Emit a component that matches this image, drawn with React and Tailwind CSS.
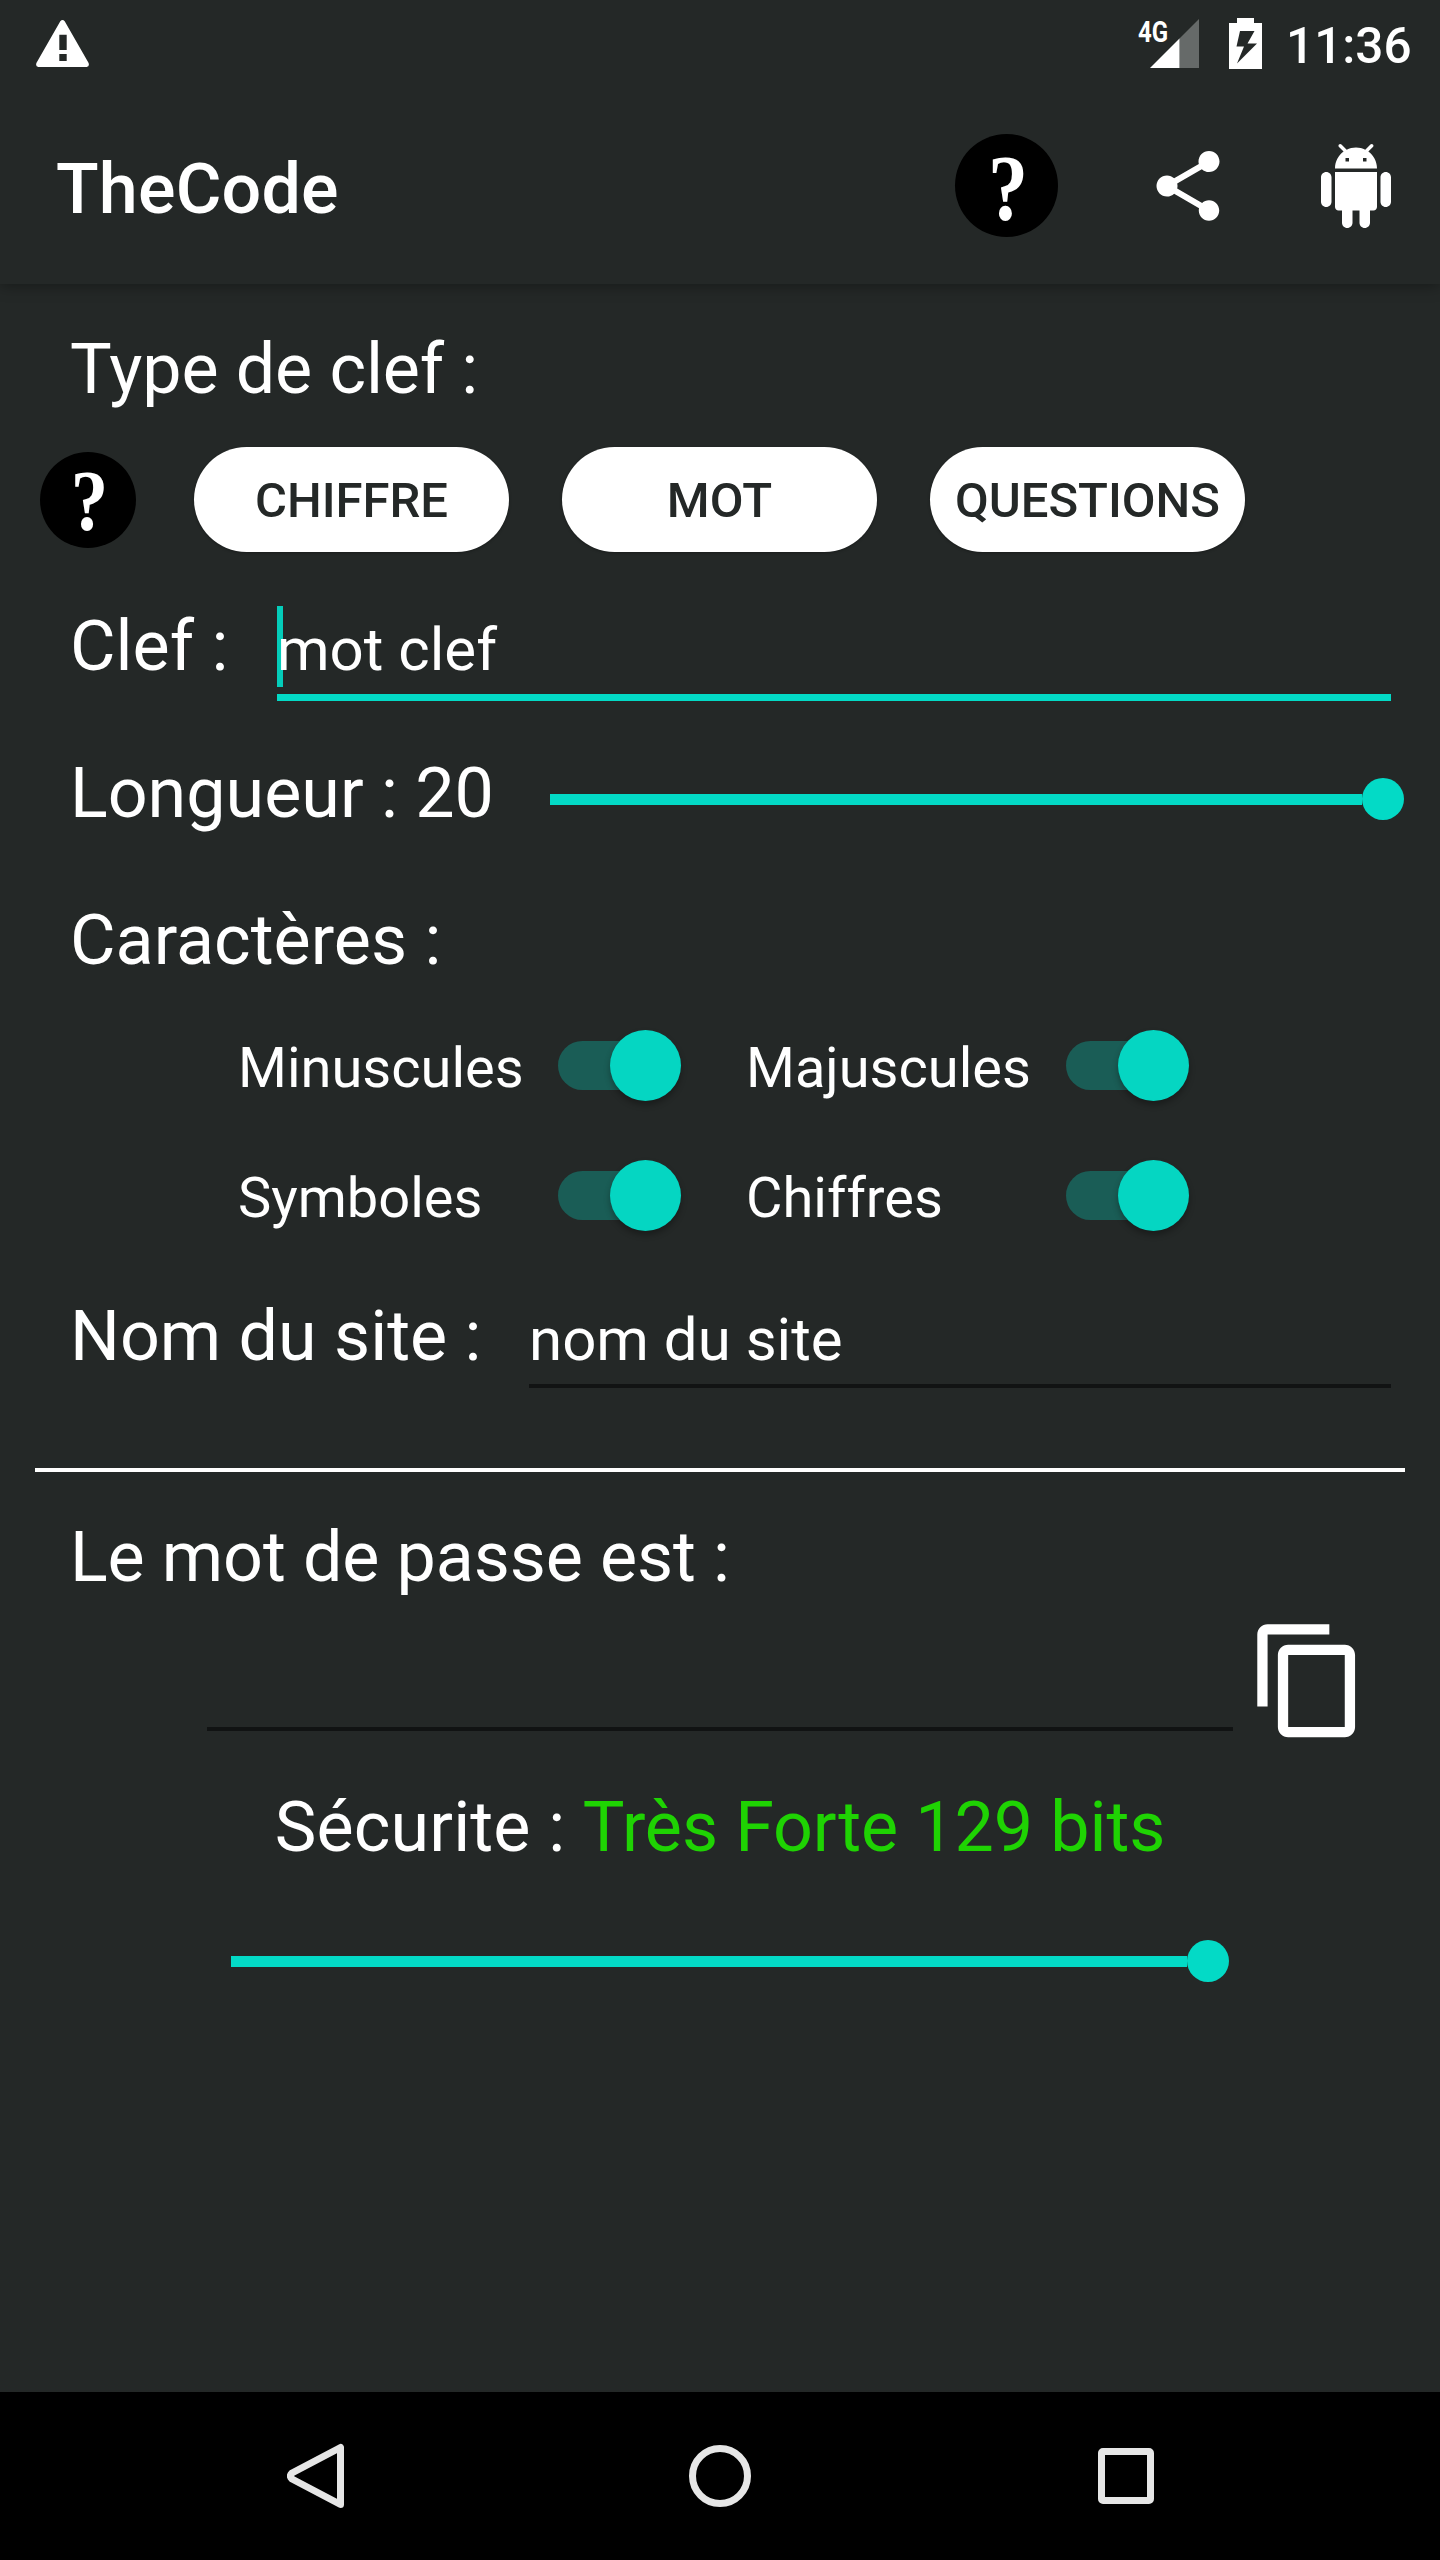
const ANDROID =
  "M6 18c0 .55.45 1 1 1h1v3.5c0 .83.67 1.5 1.5 1.5s1.5-.67 1.5-1.5V19h2v3.5c0 .83.67 1.5 1.5 1.5s1.5-.67 1.5-1.5V19h1c.55 0 1-.45 1-1V8H6v10zM3.5 8C2.67 8 2 8.67 2 9.5v7c0 .83.67 1.5 1.5 1.5S5 17.33 5 16.5v-7C5 8.67 4.33 8 3.5 8zm17 0c-.83 0-1.5.67-1.5 1.5v7c0 .83.67 1.5 1.5 1.5s1.5-.67 1.5-1.5v-7c0-.83-.67-1.5-1.5-1.5zm-4.97-5.84l1.3-1.3c.2-.2.2-.51 0-.71-.2-.2-.51-.2-.71 0l-1.48 1.48C13.85 1.23 12.95 1 12 1c-.96 0-1.86.23-2.66.63L7.85.15c-.2-.2-.51-.2-.71 0-.2.2-.2.51 0 .71l1.31 1.31C6.97 3.26 6 5.01 6 7h12c0-1.99-.97-3.75-2.47-4.84zM10 5H9V4h1v1zm5 0h-1V4h1v1z";
const SHARE =
  "M18 16.08c-.76 0-1.44.3-1.96.77L8.91 12.7c.05-.23.09-.46.09-.7s-.04-.47-.09-.7l7.05-4.11c.54.5 1.25.81 2.04.81 1.66 0 3-1.34 3-3s-1.34-3-3-3-3 1.34-3 3c0 .24.04.47.09.7L8.04 9.81C7.5 9.31 6.79 9 6 9c-1.66 0-3 1.34-3 3s1.34 3 3 3c.79 0 1.5-.31 2.04-.81l7.12 4.16c-.05.21-.08.43-.08.65 0 1.61 1.31 2.92 2.92 2.92 1.61 0 2.92-1.31 2.92-2.92s-1.31-2.92-2.92-2.92z";
const COPY =
  "M16 1H4c-1.1 0-2 .9-2 2v14h2V3h12V1zm3 4H8c-1.1 0-2 .9-2 2v14c0 1.1.9 2 2 2h11c1.1 0 2-.9 2-2V7c0-1.1-.9-2-2-2zm0 16H8V7h11v14z";

function Icon({ d, className }) {
  return (
    <svg viewBox="0 0 24 24" fill="currentColor" className={className}>
      <path d={d} />
    </svg>
  );
}

function Label({ children, className = "" }) {
  return (
    <div className={"text-[70px] leading-[82px] whitespace-pre " + className}>{children}</div>
  );
}

function Slider({ className }) {
  return (
    <div className={"flex h-[42px] items-center " + className}>
      <div className="h-[11px] flex-1 bg-[#03dac6]" />
      <div className="size-[42px] rounded-full bg-[#03dac6]" />
    </div>
  );
}

function Toggle({ label }) {
  return (
    <div className="flex h-[130px] w-[508px] items-center">
      <span className="w-[320px] pt-[6px] text-[56px] leading-[66px]">{label}</span>
      <div className="flex h-[49px] w-[118px] items-center justify-end rounded-full bg-[#1a5d56]">
        <div className="-mr-[5px] size-[71px] rounded-full bg-[#05d6c2] shadow-[0_4px_6px_rgba(0,0,0,0.3)]" />
      </div>
    </div>
  );
}

function PillButton({ children }) {
  return (
    <button className="h-[105px] w-[315px] rounded-full bg-white pt-[3px] text-[49px] leading-[58px] font-medium text-[#242827] shadow-[0_1px_3px_rgba(0,0,0,0.3)]">
      {children}
    </button>
  );
}

function StatusBar() {
  return (
    <div className="flex h-[84px] items-start text-white">
      <svg viewBox="0 0 53 47" fill="currentColor" className="mt-5 ml-9 h-[47px] w-[53px]">
        <path
          fillRule="evenodd"
          d="M24.3 1.2q2.2-2.2 4.4 0L52.6 43q1.1 3.8-2 3.9H2.4Q-.7 46.700.4 43zM23.300 14.700v15.300h7.400v-15.300zM23.300 34v7h7.400v-7z"
        />
      </svg>
      <div className="flex-1" />
      <div className="relative mt-[19px] h-[49px] w-[61px]">
        <span className="absolute top-[-5px] left-0 origin-left scale-x-[0.8] text-[30px] leading-[35px] font-bold">
          4G
        </span>
        <svg viewBox="0 0 49 49" className="ml-3 size-[49px]">
          <path d="M49 0V49H29.500V19.500z" fill="#666a69" />
          <path d="M29.500 19.500V49H0z" fill="#fff" />
        </svg>
      </div>
      <svg viewBox="0 0 33 51" fill="currentColor" className="mt-[18px] ml-[30px] h-[51px] w-[33px]">
        <path
          fillRule="evenodd"
          d="M8 0h17v5h8v46H0V5h8zM11 13L7.500 28.500H15L8 45.500 28 25.500H18.500L25.500 13z"
        />
      </svg>
      <div className="mt-[17px] ml-[24px] w-[154px] text-[49.500px] leading-[58px] font-medium">11:36</div>
    </div>
  );
}

export default function App() {
  return (
    <div
      className="flex h-[2560px] w-[1440px] flex-col overflow-hidden bg-[#242827] text-white"
      style={{ fontFamily: "Roboto, sans-serif" }}
    >
      <header className="h-[284px] shrink-0 shadow-[0_2px_14px_rgba(0,0,0,0.35)]">
        <StatusBar />
        <div className="flex h-[200px] items-start pl-14">
          <h1 className="mt-[64px] text-[70px] leading-[82px] font-medium tracking-[0.2px]">
            TheCode
          </h1>
          <div className="flex-1" />
          <div className="mt-[50px] mr-[88px] flex size-[103px] items-center justify-center rounded-full bg-black">
            <span className="scale-x-[0.86] pt-[3px] pl-[3px] font-[Liberation_Serif] text-[93px] leading-[103px] font-bold">
              ?
            </span>
          </div>
          <Icon d={SHARE} className="mt-[60px] mr-[84px] size-[84px]" />
          <Icon d={ANDROID} className="mt-[60px] mr-[42px] size-[84px]" />
        </div>
      </header>

      <main className="flex flex-1 flex-col pt-[44px]">
        <Label className="ml-[70px] tracking-[-0.1px]">Type de clef :</Label>

        <div className="mt-[37px] flex items-center">
          <div className="mr-[58px] ml-[40px] flex size-[96px] items-center justify-center rounded-full bg-black">
            <span className="scale-x-[0.86] pt-[3px] pl-[3px] font-[Liberation_Serif] text-[87px] leading-[96px] font-bold">
              ?
            </span>
          </div>
          <div className="flex gap-[53px]">
            <PillButton>CHIFFRE</PillButton>
            <PillButton>MOT</PillButton>
            <PillButton>QUESTIONS</PillButton>
          </div>
        </div>

        <div className="mt-[53px] flex h-[96px]">
          <Label className="ml-[70px] w-[207px]">Clef :</Label>
          <div className="relative h-[96px] w-[1114px] border-b-[7px] border-[#03dac6]">
            <div className="absolute top-px left-0 h-[81px] w-[6px] bg-[#04cdba]" />
            <div className="relative pt-[4px] text-[60px] leading-[82px]">mot clef</div>
          </div>
        </div>

        <div className="mt-[57px] flex h-[82px] items-center">
          <Label className="-mt-[12px] ml-[70px] w-[480px]">Longueur : 20</Label>
          <Slider className="w-[854px]" />
        </div>

        <Label className="mt-[59px] ml-[70px]">Caractères :</Label>

        <div className="mt-[19px] ml-[238px] grid w-[1016px] grid-cols-2">
          <Toggle label="Minuscules" />
          <Toggle label="Majuscules" />
          <Toggle label="Symboles" />
          <Toggle label="Chiffres" />
        </div>

        <div className="mt-[35px] flex h-[93px]">
          <Label className="ml-[70px] w-[459px]">Nom du site :</Label>
          <div className="h-[93px] w-[862px] border-b-4 border-[#111313] pt-[4px] text-[60px] leading-[82px]">
            nom du site
          </div>
        </div>

        <div className="mx-[35px] mt-[80px] h-1 bg-white" />

        <Label className="mt-[44px] ml-[70px] tracking-[-0.12px]">Le mot de passe est :</Label>

        <div className="flex h-[145px]">
          <div className="ml-[207px] h-[133px] w-[1026px] border-b-4 border-[#111313]" />
          <Icon d={COPY} className="mt-[21px] ml-[14px] size-[123.500px]" />
        </div>

        <div className="mt-[43px] flex justify-center">
          <Label className="tracking-[0.15px]">Sécurite : </Label>
          <Label className="tracking-[-0.1px] text-[#1fd303]">Très Forte 129 bits</Label>
        </div>

        <Slider className="mt-[72px] ml-[231px] w-[998px]" />
      </main>

      <nav className="flex h-[168px] items-center bg-black text-[#e6e6e6]">
        <svg viewBox="0 0 57 66" className="ml-[287px] h-[66px] w-[57px]" fill="none">
          <path
            d="M53.500 4.500V61.500L5 36Q2 33 5 30z"
            stroke="currentColor"
            strokeWidth="7"
            strokeLinejoin="round"
          />
        </svg>
        <div className="ml-[345px] size-[62px] rounded-full border-[7px] border-[#e6e6e6]" />
        <div className="ml-[347px] size-[56px] rounded-[5px] border-[7px] border-[#e6e6e6]" />
      </nav>
    </div>
  );
}
